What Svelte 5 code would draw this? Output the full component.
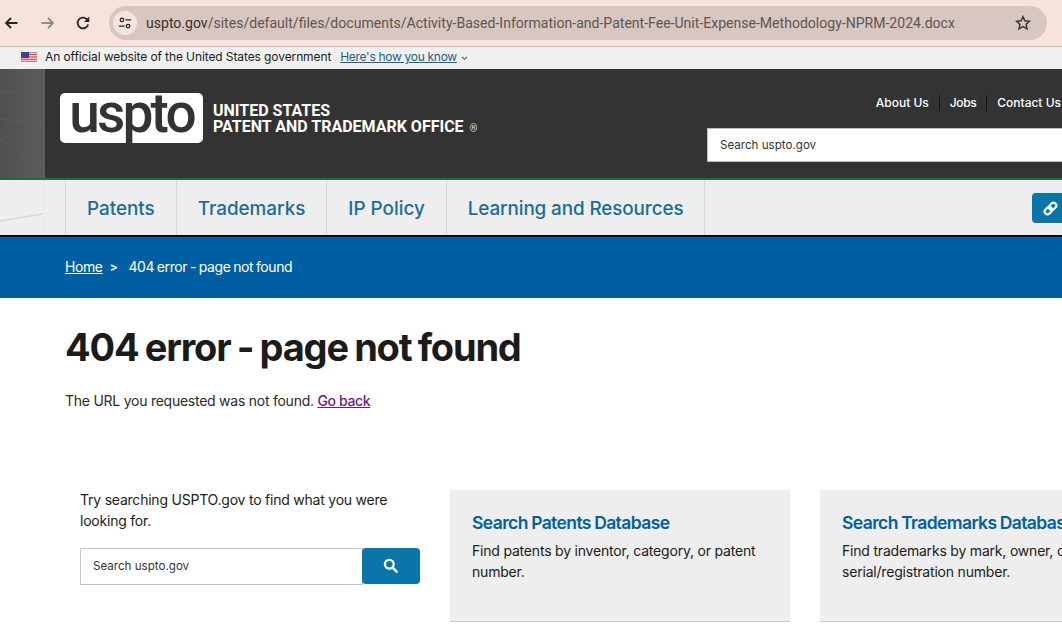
<script>
  const navItems = ['Patents', 'Trademarks', 'IP Policy', 'Learning and Resources'];
  const cards = [
    { title: 'Search Patents Database', text: 'Find patents by inventor, category, or patent number.' },
    { title: 'Search Trademarks Database', text: 'Find trademarks by mark, owner, or serial/registration number.' }
  ];
</script>

<div class="page">
  <div class="chrome">
    <svg class="tool first" viewBox="0 0 16 16" width="16" height="16"><path d="M14.500 8H3M8 3 3 8l5 5" fill="none" stroke="#2a2320" stroke-width="1.800"/></svg>
    <svg class="tool fwd" viewBox="0 0 16 16" width="16" height="16"><path d="M1.500 8H13M8 3l5 5-5 5" fill="none" stroke="#94898a" stroke-width="1.800"/></svg>
    <svg class="tool reload" viewBox="0 0 16 16" width="16" height="16"><path d="M13.200 9.500A5.400 5.400 0 1 1 11.800 4.100L13.500 6" fill="none" stroke="#2a2320" stroke-width="1.800"/><path d="M14.300 1.600V6.900H9Z" fill="#2a2320"/></svg>
    <div class="omnibox">
      <span class="site-icon">
        <svg viewBox="0 0 16 16" width="14" height="14"><circle cx="4.500" cy="4.500" r="2" fill="none" stroke="#2a2320" stroke-width="1.400"/><path d="M8.500 4.500H15M1 11.500H7.500" stroke="#2a2320" stroke-width="1.500"/><circle cx="11.500" cy="11.500" r="2" fill="none" stroke="#2a2320" stroke-width="1.400"/></svg>
      </span>
      <span class="url"><span class="host">uspto.gov</span>/sites/default/files/documents/Activity-Based-Information-and-Patent-Fee-Unit-Expense-Methodology-NPRM-2024.docx</span>
      <svg class="star" viewBox="0 0 16 16" width="16" height="16"><path d="m8 1.700 1.900 4.100 4.500.5-3.300 3 .9 4.500L8 11.600l-4 2.200.9-4.500-3.300-3 4.500-.5Z" fill="none" stroke="#3c3432" stroke-width="1.500"/></svg>
    </div>
  </div>

  <div class="gov">
    <svg class="flag" viewBox="0 0 16 11" width="16" height="11">
      <rect width="16" height="11" fill="#fff"/>
      <path d="M0 .8h16M0 2.500h16M0 4.200h16M0 5.900h16M0 7.600h16M0 9.300h16" stroke="#c8383c" stroke-width=".9"/>
      <rect width="8" height="6" fill="#3b3f8e"/>
    </svg>
    <span class="gov-text">An official website of the United States government</span>
    <a class="gov-link" href="#know">Here's how you know </a>
    <svg class="chev" viewBox="0 0 8 6" width="7" height="5"><path d="m1 1 3 3 3-3" fill="none" stroke="#1d5f8a" stroke-width="1.300"/></svg>
  </div>

  <header class="masthead">
    <svg class="mast-strip" viewBox="0 0 45 109" width="45" height="109" preserveAspectRatio="none">
      <defs>
        <linearGradient id="stripShade" x1="0" x2="1" y1="0" y2="0">
          <stop offset="0" stop-color="#505050"/>
          <stop offset="1" stop-color="#5c5c5c"/>
        </linearGradient>
      </defs>
      <rect width="45" height="109" fill="url(#stripShade)"/>
      <path d="M0 22 45 28M0 50 45 57M0 70 45 98" stroke="#626262" stroke-width=".6" fill="none"/>
    </svg>
    <div class="mast-body">
      <div class="logo"><span class="logo-word">uspto</span></div>
      <div class="agency">
        <span>UNITED STATES</span>
        <span>PATENT AND TRADEMARK OFFICE<small>®</small></span>
      </div>
      <div class="mast-right">
        <nav class="util">
          <a href="#about">About Us</a>
          <a class="jobs" href="#jobs">Jobs</a>
          <a href="#contact">Contact Us</a>
        </nav>
        <div class="mast-search">Search uspto.gov</div>
      </div>
    </div>
  </header>

  <nav class="mainnav">
    <svg class="nav-strip" viewBox="0 0 45 55" width="45" height="55">
      <path d="M0 41 43 34" stroke="#d9d9d9" stroke-width="1.500" fill="none"/>
      <path d="M44 0V55" stroke="#e2e2e2" stroke-width="1" stroke-dasharray="2 2" fill="none"/>
    </svg>
    <div class="nav-pad"></div>
    {#each navItems as item}
      <a class="nav-item" href="#nav">{item}</a>
    {/each}
    <div class="spacer"></div>
    <div class="link-btn">
      <svg viewBox="0 0 16 16" width="15" height="15">
        <g fill="none" stroke="#fff" stroke-width="2.300" transform="rotate(-45 8 8)">
          <rect x="0.500" y="5" width="8.500" height="6" rx="3"/>
          <rect x="7" y="5" width="8.500" height="6" rx="3"/>
        </g>
      </svg>
    </div>
  </nav>

  <div class="crumbs">
    <a href="#home">Home</a>
    <span class="sep">&gt;</span>
    <span>404 error - page not found</span>
  </div>

  <main class="content">
    <h1>404 error - page not found</h1>
    <p class="lead">The URL you requested was not found. <a href="#back">Go back</a></p>

    <div class="row">
      <div class="search-col">
        <p>Try searching USPTO.gov to find what you were looking for.</p>
        <div class="search-line">
          <div class="search-input">Search uspto.gov</div>
          <div class="search-btn">
            <svg viewBox="0 0 16 16" width="15" height="15"><circle cx="6.700" cy="6.700" r="4.700" fill="none" stroke="#fff" stroke-width="2.400"/><path d="m10.300 10.300 4.200 4.200" stroke="#fff" stroke-width="2.600" stroke-linecap="round"/></svg>
          </div>
        </div>
      </div>
      {#each cards as card}
        <div class="card">
          <h2>{card.title}</h2>
          <p>{card.text}</p>
        </div>
      {/each}
    </div>
  </main>
</div>

<style>
  :global(body) {
    margin: 0;
    background: #fff;
    overflow: hidden;
  }
  .page {
    width: 1062px;
    height: 630px;
    overflow: hidden;
    font-family: "Inter", "Liberation Sans", sans-serif;
    color: #1b1b1b;
  }
  .chrome {
    height: 46px;
    background: #f8e2dc;
    border-bottom: 1px solid #c9bdb9;
    display: flex;
    align-items: center;
  }
  .tool { flex: none; }
  .first { margin-left: 3px; }
  .fwd { margin-left: 21px; }
  .reload { margin-left: 19px; }
  .omnibox {
    margin-left: 18px;
    width: 938px;
    height: 34px;
    border-radius: 17px;
    background: #d8c6c1;
    display: flex;
    align-items: center;
    flex: none;
  }
  .site-icon {
    width: 24px;
    height: 24px;
    margin-left: 4px;
    border-radius: 50%;
    background: #f5e3de;
    display: flex;
    align-items: center;
    justify-content: center;
    flex: none;
  }
  .url {
    margin-left: 9px;
    font-family: "Roboto", sans-serif;
    font-size: 14.050px;
    color: #5f5552;
    white-space: nowrap;
    width: 867px;
    flex: none;
  }
  .host { color: #3a312e; }
  .star { margin-left: 2px; flex: none; }
  .gov {
    height: 22px;
    background: #f0f0f0;
    display: flex;
    align-items: center;
    font-size: 12px;
    line-height: 20px;
    letter-spacing: -.1px;
    padding-left: 21px;
    padding-bottom: 2px;
    box-sizing: border-box;
  }
  .flag { margin-right: 8px; flex: none; }
  .gov-text { color: #1b1b1b; }
  .gov-link {
    margin-left: 9px;
    color: #1d5f8a;
    text-decoration: underline;
    white-space: pre;
    letter-spacing: -.3px;
  }
  .chev { margin-left: 4px; margin-top: 2px; }
  .masthead {
    height: 111px;
    box-sizing: border-box;
    background: #333;
    display: flex;
    border-bottom: 2px solid #17703f;
  }
  .mast-strip {
    width: 45px;
    flex: none;
  }
  .mast-body {
    flex: 1;
    display: flex;
    align-items: flex-start;
    min-width: 0;
  }
  .logo {
    margin: 24px 0 0 15px;
    width: 143px;
    height: 50px;
    background: #fff;
    border-radius: 5px;
    display: flex;
    justify-content: center;
    flex: none;
  }
  .logo-word {
    font-family: "Roboto", sans-serif;
    font-size: 55px;
    font-weight: 500;
    line-height: 40px;
    letter-spacing: -2.800px;
    color: #333;
  }
  .agency {
    margin: 34px 0 0 10px;
    display: flex;
    flex-direction: column;
    color: #fff;
    font-family: "Roboto", sans-serif;
    font-weight: 700;
    font-size: 16px;
    line-height: 16px;
    letter-spacing: 0;
    white-space: nowrap;
  }
  .agency small {
    font-size: 10px;
    font-weight: 400;
    margin-left: 6px;
    color: #ddd;
  }
  .mast-right {
    margin-left: auto;
    width: 355px;
    flex: none;
    display: flex;
    flex-direction: column;
  }
  .util {
    margin-top: 26px;
    display: flex;
    justify-content: flex-end;
    padding-right: 1px;
    font-size: 12px;
    font-weight: 500;
    height: 16px;
    line-height: 16px;
  }
  .util a {
    color: #fff;
    text-decoration: none;
    padding: 0 10px;
    border-left: 1px solid #111;
    white-space: nowrap;
  }
  .util a:first-child { border-left: 0; }
  .util a:last-child { padding-right: 0; }
  .util .jobs { letter-spacing: -.4px; }
  .mast-search {
    margin-top: 17px;
    height: 34px;
    background: #fff;
    border: 1px solid #bbb;
    border-right: 0;
    box-sizing: border-box;
    padding-left: 12px;
    display: flex;
    align-items: center;
    font-size: 11.600px;
    color: #333;
  }
  .mainnav {
    height: 57px;
    box-sizing: border-box;
    background: #eee;
    display: flex;
    border-bottom: 2px solid #000;
  }
  .nav-strip {
    width: 45px;
    flex: none;
  }
  .nav-pad { width: 20px; flex: none; }
  .nav-item {
    display: flex;
    align-items: center;
    padding: 2px 21px 0;
    border-left: 1px solid #d8d8d8;
    color: #1b6c96;
    font-size: 18.850px;
    font-weight: 500;
    text-decoration: none;
    white-space: nowrap;
  }
  .nav-item:last-of-type {
    border-right: 1px solid #d8d8d8;
    letter-spacing: -.1px;
  }
  .spacer { flex: 1; }
  .link-btn {
    width: 30px;
    height: 30px;
    margin-top: 13px;
    background: #0a75a8;
    border-radius: 4px 0 0 4px;
    display: flex;
    align-items: center;
    padding-left: 11px;
    box-sizing: border-box;
  }
  .crumbs {
    height: 61px;
    background: #005ea2;
    display: flex;
    align-items: center;
    padding: 0 0 2px 65px;
    box-sizing: border-box;
    color: #fff;
    font-size: 14px;
    letter-spacing: -.4px;
    word-spacing: -.8px;
    white-space: pre;
  }
  .crumbs a { color: #fff; }
  .sep { margin: 0 11px 0 7px; font-size: 12px; font-weight: 700; }
  .content { padding: 0 0 0 65px; }
  h1 {
    margin: 27px 0 0;
    font-size: 38px;
    line-height: 44px;
    font-weight: 700;
    letter-spacing: -1.200px;
    word-spacing: -1.500px;
    color: #1b1b1b;
    white-space: nowrap;
  }
  .lead {
    margin: 21px 0 0;
    font-size: 14px;
    line-height: 22px;
    letter-spacing: -.25px;
    color: #2a2a2a;
  }
  .lead a { color: #6a1b7f; font-weight: 500; letter-spacing: -.35px; }
  .row {
    margin-top: 78px;
    display: flex;
    width: 1100px;
  }
  .search-col {
    width: 340px;
    margin-left: 15px;
    margin-top: -1px;
    flex: none;
  }
  .search-col p {
    margin: 0;
    font-size: 14px;
    line-height: 21px;
    letter-spacing: -.22px;
  }
  .search-line {
    margin-top: 17px;
    display: flex;
  }
  .search-input {
    width: 283px;
    height: 37px;
    background: #fff;
    border: 1px solid #c6c6c6;
    box-sizing: border-box;
    padding: 0 0 2px 12px;
    display: flex;
    align-items: center;
    font-size: 11.600px;
    color: #333;
  }
  .search-btn {
    width: 58px;
    height: 36px;
    background: #0a75a8;
    margin-left: -1px;
    border-radius: 4px;
    display: flex;
    align-items: center;
    justify-content: center;
    padding: 0 2px 2px 0;
    box-sizing: border-box;
  }
  .card {
    flex: none;
    width: 340px;
    height: 132px;
    margin-left: 30px;
    background: #eee;
    border-bottom: 1px solid #ccc;
    box-sizing: border-box;
    padding: 22px 22px 0;
  }
  .card h2 {
    margin: 0;
    color: #005ea2;
    font-size: 17.500px;
    line-height: 22px;
    font-weight: 600;
    letter-spacing: -.6px;
    word-spacing: -.5px;
    white-space: nowrap;
  }
  .card p {
    margin: 6px 0 0;
    font-size: 14px;
    line-height: 21px;
    letter-spacing: -.2px;
  }
</style>
